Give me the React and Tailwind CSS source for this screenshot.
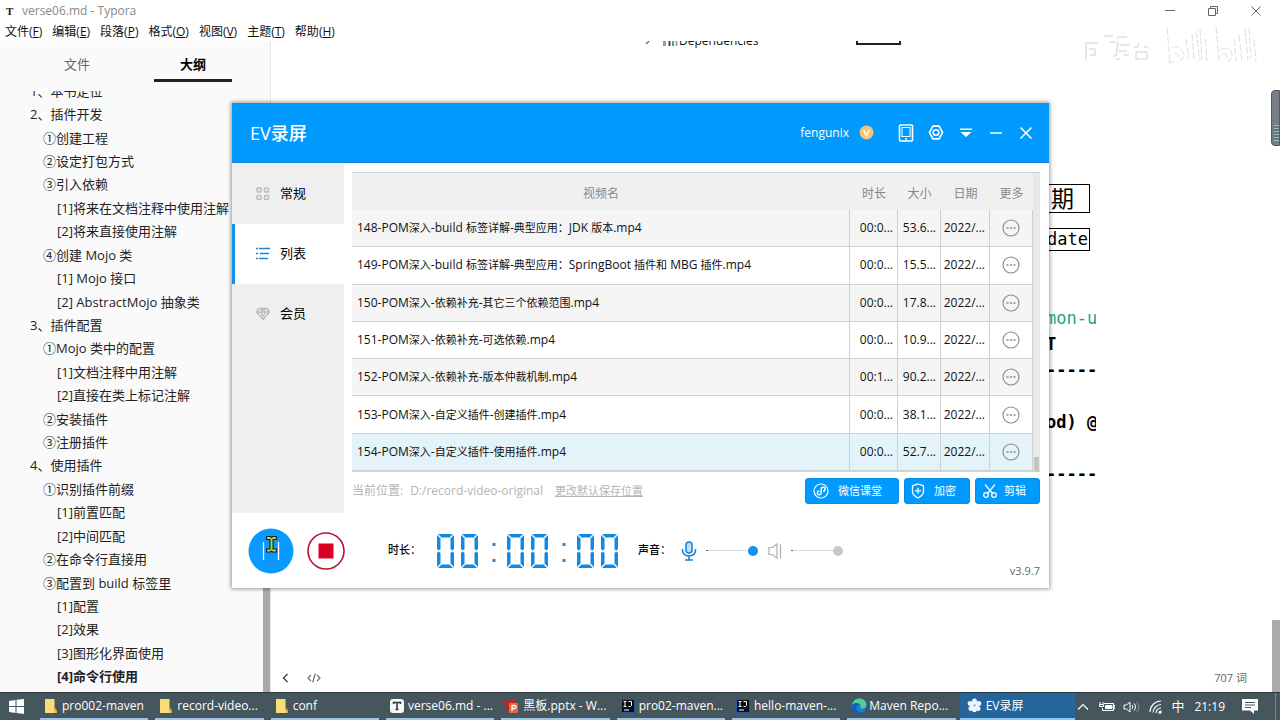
import { useState } from 'react'

const OUTLINE = [
  [0, '1、本书定位'],
  [0, '2、插件开发'],
  [1, '①创建工程'],
  [1, '②设定打包方式'],
  [1, '③引入依赖'],
  [2, '[1]将来在文档注释中使用注解'],
  [2, '[2]将来直接使用注解'],
  [1, '④创建 Mojo 类'],
  [2, '[1] Mojo 接口'],
  [2, '[2] AbstractMojo 抽象类'],
  [0, '3、插件配置'],
  [1, '①Mojo 类中的配置'],
  [2, '[1]文档注释中用注解'],
  [2, '[2]直接在类上标记注解'],
  [1, '②安装插件'],
  [1, '③注册插件'],
  [0, '4、使用插件'],
  [1, '①识别插件前缀'],
  [2, '[1]前置匹配'],
  [2, '[2]中间匹配'],
  [1, '②在命令行直接用'],
  [1, '③配置到 build 标签里'],
  [2, '[1]配置'],
  [2, '[2]效果'],
  [2, '[3]图形化界面使用'],
  [2, '[4]命令行使用'],
]

const INDENT = ['pl-[30px]', 'pl-[43px]', 'pl-[57px]']

const MENUS = [
  ['文件', 'F'],
  ['编辑', 'E'],
  ['段落', 'P'],
  ['格式', 'O'],
  ['视图', 'V'],
  ['主题', 'T'],
  ['帮助', 'H'],
]

const VIDEOS = [
  ['148-POM深入-build 标签详解-典型应用：JDK 版本.mp4', '00:0...', '53.6...'],
  ['149-POM深入-build 标签详解-典型应用：SpringBoot 插件和 MBG 插件.mp4', '00:0...', '15.5...'],
  ['150-POM深入-依赖补充-其它三个依赖范围.mp4', '00:0...', '17.8...'],
  ['151-POM深入-依赖补充-可选依赖.mp4', '00:0...', '10.9...'],
  ['152-POM深入-依赖补充-版本仲裁机制.mp4', '00:1...', '90.2...'],
  ['153-POM深入-自定义插件-创建插件.mp4', '00:0...', '38.1...'],
  ['154-POM深入-自定义插件-使用插件.mp4', '00:0...', '52.7...'],
]

export default function App() {
  return (
    <div className="relative h-screen overflow-hidden flex flex-col bg-white text-[#222] font-['Open_Sans','Noto_Sans_CJK_SC',sans-serif]">
      <TitleBar />
      <MenuBar />
      <main className="flex-1 min-h-0 flex">
        <Sidebar />
        <Document />
      </main>
      <Taskbar />
      <Watermark />
      <Recorder />
    </div>
  )
}

/* ---------- Typora ---------- */

function TitleBar() {
  return (
    <header className="h-[22px] shrink-0 flex items-center pl-1 pr-[18px] text-xs text-[#8a8a8a]">
      <span className="w-[18px] pl-[2px] font-['Liberation_Serif',serif] font-bold text-[11px] text-[#222]">T</span>
      <span>verse06.md - Typora</span>
      <div className="ml-auto flex items-center gap-8 text-[#666]">
        <button type="button" aria-label="minimize">
          <svg width="11" height="11" viewBox="0 0 11 11" stroke="currentColor" fill="none">
            <path d="M0 4.500h10" />
          </svg>
        </button>
        <button type="button" aria-label="restore">
          <svg width="11" height="11" viewBox="0 0 11 11" stroke="currentColor" fill="none">
            <path d="M.5 2.500h7v7h-7zM2.500 2.500v-2h7v7h-2" />
          </svg>
        </button>
        <button type="button" aria-label="close">
          <svg width="11" height="11" viewBox="0 0 11 11" stroke="currentColor" fill="none">
            <path d="M.5.5l9 9M9.500.5l-9 9" />
          </svg>
        </button>
      </div>
    </header>
  )
}

function MenuBar() {
  return (
    <nav className="h-[19px] shrink-0 flex items-center gap-[10px] pl-[5px] text-xs text-[#111]">
      {MENUS.map(([name, key]) => (
        <button key={key} type="button" className="whitespace-nowrap">
          {name}(<u>{key}</u>)
        </button>
      ))}
    </nav>
  )
}

function Sidebar() {
  const [tab, setTab] = useState('大纲')
  return (
    <aside className="w-[271px] shrink-0 flex flex-col bg-[#fafafa] border-r border-[#e6e6e6]">
      <div className="h-[50px] shrink-0 flex justify-center gap-[38px] pb-[9px] text-[13px]">
        {['文件', '大纲'].map((name) => (
          <button
            key={name}
            type="button"
            onClick={() => setTab(name)}
            className={
              tab === name
                ? 'w-[78px] pt-[10px] border-b-[3px] border-[#222] font-bold text-black'
                : 'w-[78px] pt-[10px] border-b-[3px] border-transparent text-[#666]'
            }
          >
            {name}
          </button>
        ))}
      </div>
      <div className="flex-1 min-h-0 flex overflow-hidden">
        <ul className="flex-1 -mt-3 mb-1 grid auto-rows-fr text-[13px] leading-5 whitespace-nowrap">
          {OUTLINE.map(([level, text], i) => (
            <li key={text + i} className={`min-h-0 flex items-center ${INDENT[level]}`}>
              <a href="#outline" className={i === OUTLINE.length - 1 ? 'font-bold' : ''}>
                {text}
              </a>
            </li>
          ))}
        </ul>
        <div className="w-[7px] flex flex-col justify-end">
          <div className="h-1/5 bg-[#aaa]" />
        </div>
      </div>
    </aside>
  )
}

function Document() {
  return (
    <section className="flex-1 min-w-0 flex flex-col overflow-hidden">
      <div className="flex-1 min-h-0 flex">
        <div className="flex-1 min-w-0 flex flex-col pr-[175px] overflow-hidden">
          <div className="h-2 overflow-hidden flex items-end pl-[372px]">
            <svg width="36" height="9" viewBox="0 0 36 9" fill="none">
              <path d="M3 4l4-4" stroke="#777" strokeWidth="1.500" />
              <path d="M21.500 0v6" stroke="#999" strokeWidth="3" />
              <path d="M26.500 0v6" stroke="#444" strokeWidth="2" />
              <path d="M30 0v6" stroke="#5b9a7a" strokeWidth="2" />
              <path d="M33.500 0v6" stroke="#7ab0cc" strokeWidth="2" />
            </svg>
            <span className="text-xs leading-4 text-[#111]">Dependencies</span>
            <span className="ml-[97px] mb-1 w-[45px] h-6 border-2 border-[#222]" />
          </div>
          <div className="mt-[135px] flex flex-col items-end pr-[6px] text-black">
            <div className="h-[29px] w-[120px] border border-black pr-[15px] flex items-center justify-end text-[23px] leading-none">日期</div>
            <div className="mt-[15px] h-[23px] w-[120px] border border-black pr-px flex items-center justify-end font-['DejaVu_Sans_Mono',monospace] text-[17px]">
              date
            </div>
          </div>
          <pre className="mt-[54px] self-end w-[50px] overflow-hidden font-['DejaVu_Sans_Mono',monospace] text-[17px] leading-[26px] text-black font-bold">
            <span className="font-normal text-[#1aa58a]">mon-u</span>
            {'\nT\n-----\n\nod) @\n\n-----'}
          </pre>
        </div>
        <div className="w-[9px] flex flex-col pt-[49px]">
          <div className="h-[56px] rounded-l border border-[#555a66] bg-[#777c88] flex flex-col justify-end pb-1 pl-[2px]">
            <div className="h-4 bg-[repeating-linear-gradient(to_bottom,#8fc7b4_0_1px,#6c727c_1px_3px)]" />
          </div>
        </div>
      </div>
      <div className="h-11 shrink-0 flex justify-end">
        <div className="w-2 bg-[#aaa]" />
      </div>
      <div className="h-7 shrink-0 flex text-xs text-[#666]">
        <div className="flex-1 flex items-center pl-[11px] pr-[25px]">
          <button type="button" aria-label="back">
            <svg width="7" height="10" viewBox="0 0 7 10" fill="none" stroke="#444" strokeWidth="1.400">
              <path d="M5.500 1L1.500 5l4 4" />
            </svg>
          </button>
          <button type="button" aria-label="source" className="ml-[18px]">
            <svg width="14" height="10" viewBox="0 0 14 10" fill="none" stroke="#666" strokeWidth="1.100">
              <path d="M4 2L1 5l3 3M10 2l3 3-3 3M8.300 .5l-2.600 9" />
            </svg>
          </button>
          <span className="ml-auto text-[11px]">707 词</span>
        </div>
        <div className="w-2 bg-[#aaa]" />
      </div>
    </section>
  )
}

function Watermark() {
  return (
    <svg className="absolute right-5 top-6" width="178" height="42" viewBox="0 0 178 42" fill="none" stroke="#d0d0d0" strokeWidth="1">
      <path d="M4 36V19h12M7 25h6v6H8M22 12h9M35 13h10M28 18h6M38 21h10M36 18l-2 14h-3M36 27h9M34 35h4M52 23h4l1-4M62 23h4M54 28h11v7H54zM41 31h6" />
      <path d="M85 4l3 33M90 24c8-5 16 7 8 13M92 29c4-1 6 4 2 5M86 38h6M104 15l3 20M110 10l2 26M114 7l4 30M118 5l2 30M123 15l2 22" stroke="#dedede" strokeDasharray="7 2" />
      <path d="M134 3l3 34M139 25c10-4 15 7 7 13M141 30c4-1 6 4 2 5M152 15l2 22M157 11l3 27M163 5l3 31M167 4l2 30M172 16l2 21" stroke="#dedede" strokeDasharray="7 2" />
    </svg>
  )
}

/* ---------- EV recorder window ---------- */

function Recorder() {
  return (
    <div className="absolute left-[232px] top-[103px] w-[817px] flex flex-col bg-white shadow-[0_0_4px_1px_rgba(0,0,0,0.4)]">
      <RecorderHeader />
      <div className="h-[350px] flex">
        <RecorderTabs />
        <div className="flex-1 min-w-0 pl-2 pr-[9px] pt-[9px] flex flex-col">
          <VideoTable />
          <VideoActions />
        </div>
      </div>
      <Controls />
    </div>
  )
}

function RecorderHeader() {
  return (
    <div className="h-[60px] bg-[#009aff] border-b border-[#1583d0] text-white flex items-center pl-[18px] pr-[15px]">
      <h1 className="text-lg font-medium">EV录屏</h1>
      <span className="ml-auto text-xs">fengunix</span>
      <svg className="ml-[10px]" width="15" height="15" viewBox="0 0 15 15">
        <circle cx="7.500" cy="7.500" r="7" fill="#f8c272" />
        <path d="M4.500 5l3 5.500L10.500 5" fill="none" stroke="#fff3dc" strokeWidth="2" />
      </svg>
      <div className="ml-6 flex items-center gap-[14px]">
        <button type="button" aria-label="phone">
          <svg width="16" height="18" viewBox="0 0 16 18" fill="none" stroke="#fff">
            <rect x="1.500" y="1" width="13" height="16" rx="1" strokeWidth="1.600" />
            <rect x="4" y="3.500" width="8" height="9" />
            <path d="M7 15h2" strokeWidth="1.500" />
          </svg>
        </button>
        <button type="button" aria-label="settings">
          <svg width="16" height="17" viewBox="0 0 17 17" fill="none" stroke="#fff">
            <path d="M5.200 1.700h6.600l1.400 2.600 2.300 4.200-2.300 4.200-1.400 2.600H5.200l-1.400-2.600L1.500 8.500l2.300-4.200z" strokeWidth="1.700" strokeLinejoin="round" />
            <circle cx="8.500" cy="8.500" r="3" strokeWidth="1.600" />
          </svg>
        </button>
        <button type="button" aria-label="menu">
          <svg width="16" height="16" viewBox="0 0 16 16" fill="#fff">
            <path d="M2 3.500h12v1.500H2zM2.500 7h11L8 12z" />
          </svg>
        </button>
        <button type="button" aria-label="minimize">
          <svg width="16" height="16" viewBox="0 0 16 16" stroke="#fff" strokeWidth="1.500">
            <path d="M2 8h12" />
          </svg>
        </button>
        <button type="button" aria-label="close">
          <svg width="16" height="16" viewBox="0 0 16 16" stroke="#fff" strokeWidth="1.500">
            <path d="M2.500 2.500l11 11M13.500 2.500l-11 11" />
          </svg>
        </button>
      </div>
    </div>
  )
}

const GridSVG = () => (
  <svg width="16" height="16" viewBox="0 0 16 16" fill="none" stroke="#bbb" strokeWidth="1.500">
    <rect x="2" y="2" width="4" height="4" rx="1" />
    <rect x="9.500" y="2" width="4" height="4" rx="1" />
    <rect x="2" y="9.500" width="4" height="4" rx="1" />
    <rect x="9.500" y="9.500" width="4" height="4" rx="1" />
  </svg>
)

const ListSVG = () => (
  <svg width="16" height="16" viewBox="0 0 16 16" fill="none" stroke="#1c86d8" strokeWidth="1.400">
    <path d="M1 2.500h2M4 2.500h11M1 7.500h2M5 7.500h9M1 12.500h2M4 12.500h9" />
  </svg>
)

const GemSVG = () => (
  <svg width="16" height="16" viewBox="0 0 16 16" fill="none" stroke="#bbb" strokeWidth="1.400" strokeLinejoin="round">
    <path d="M4 2.500h8l2.500 3.500L8 13.500 1.500 6zM1.500 6h13M5.500 6L8 10.500 10.500 6M5.500 4h5" />
  </svg>
)

const TABS = [
  ['常规', GridSVG],
  ['列表', ListSVG],
  ['会员', GemSVG],
]

function RecorderTabs() {
  const [active, setActive] = useState('列表')
  return (
    <div className="w-28 shrink-0 pt-px bg-[#efefef] flex flex-col">
      {TABS.map(([name, Icon]) => (
        <button
          key={name}
          type="button"
          onClick={() => setActive(name)}
          className={
            active === name
              ? 'h-[60px] flex items-center gap-[9px] pl-5 text-[13px] text-black bg-white border-l-[3px] border-[#1192ee]'
              : 'h-[60px] flex items-center gap-[9px] pl-5 text-[13px] text-black border-l-[3px] border-transparent'
          }
        >
          <Icon />
          {name}
        </button>
      ))}
    </div>
  )
}

// Chinese runs are set one size below the Latin ones
function FileName({ text }) {
  return text.split(/([\u3000-\uffef]+)/).map((part, i) =>
    i % 2 ? (
      <span key={i} className="text-[11px]">
        {part}
      </span>
    ) : (
      part
    )
  )
}

function VideoTable() {
  const [selected, setSelected] = useState(6)
  return (
    <div className="h-[300px] shrink-0 flex border-t border-b border-[#ccd4dc]">
      <table className="flex-1 h-[298px] table-fixed border-separate border-spacing-0 text-xs text-[#111]">
        <colgroup>
          <col />
          <col className="w-12" />
          <col className="w-[43px]" />
          <col className="w-[49px]" />
          <col className="w-[43px]" />
        </colgroup>
        <thead>
          <tr className="h-[37px] bg-[#f0f0f0] text-[#888] [&_th]:font-normal [&_th]:pt-1">
            <th>视频名</th>
            <th>时长</th>
            <th>大小</th>
            <th>日期</th>
            <th>更多</th>
          </tr>
        </thead>
        <tbody className="[&_td]:border-r [&_td]:border-b [&_td]:border-[#d0d0d0] [&_td]:p-0 [&_td]:whitespace-nowrap">
          {VIDEOS.map(([name, time, size], i) => (
            <tr
              key={name}
              onClick={() => setSelected(i)}
              className={selected === i ? 'bg-[#e4f2fa]' : i % 2 === 0 ? 'bg-[#f5f5f5]' : 'bg-white'}
            >
              <td>
                <span className="pl-[5px]">
                  <FileName text={name} />
                </span>
              </td>
              <td className="text-right">
                <span className="pr-1">{time}</span>
              </td>
              <td className="text-right">
                <span className="pr-1">{size}</span>
              </td>
              <td className="text-right">
                <span className="pr-1">2022/...</span>
              </td>
              <td>
                <button type="button" aria-label="更多" className="block mx-auto">
                  <svg width="18" height="18" viewBox="0 0 18 18" fill="none" stroke="#888">
                    <circle cx="9" cy="9" r="8" strokeWidth="1.100" />
                    <path d="M4.500 9h2M8 9h2M11.500 9h2" strokeWidth="1.600" />
                  </svg>
                </button>
              </td>
            </tr>
          ))}
        </tbody>
      </table>
      <div className="w-[7px] bg-[#e8e8ea] flex flex-col justify-end">
        <div className="h-[14px] mx-px bg-[#c4c4c4]" />
      </div>
    </div>
  )
}

function VideoActions() {
  return (
    <div className="flex-1 pb-[3px] flex items-center text-[11px] text-[#b4b4b4] whitespace-nowrap">
      <span className="text-xs">当前位置:</span>
      <span className="ml-[7px] text-xs">D:/record-video-original</span>
      <a href="#path" className="ml-3 underline">
        更改默认保存位置
      </a>
      <div className="ml-auto flex gap-[5px] text-white">
        <button type="button" className="w-[94px] h-[26px] rounded-[3px] bg-[#009aff] border border-[#0b8be6] flex items-center gap-[9px] pl-[7px]">
          <svg width="16" height="16" viewBox="0 0 16 16" fill="none" stroke="#fff" strokeWidth="1.200">
            <circle cx="8" cy="8" r="7" />
            <path d="M8.200 10a1.900 1.900 0 1 1-1.900-2M8.200 10V6M8.200 6a1.900 1.900 0 1 1 1.900 2" strokeWidth="1.400" />
          </svg>
          微信课堂
        </button>
        <button type="button" className="w-[66px] h-[26px] rounded-[3px] bg-[#009aff] border border-[#0b8be6] flex items-center gap-[8px] pl-[5px]">
          <svg width="16" height="16" viewBox="0 0 16 16" fill="none" stroke="#fff" strokeWidth="1.300">
            <path d="M8 1l5.500 1.800v5.700c0 3-2.500 5-5.500 6.500-3-1.500-5.500-3.500-5.500-6.500V2.800zM8 4.800v6M5 7.800h6" />
          </svg>
          加密
        </button>
        <button type="button" className="w-[65px] h-[26px] rounded-[3px] bg-[#009aff] border border-[#0b8be6] flex items-center gap-[6px] pl-[6px]">
          <svg width="16" height="16" viewBox="0 0 16 16" fill="none" stroke="#fff" strokeWidth="1.300">
            <path d="M3 1.500l8 9.500M13 1.500L5 11" />
            <circle cx="4" cy="12" r="2.300" />
            <circle cx="12" cy="12" r="2.300" />
          </svg>
          剪辑
        </button>
      </div>
    </div>
  )
}

const Digit = () => (
  <svg width="17" height="34" viewBox="0 0 17 34" fill="#118ae6">
    <path d="M1 0h15l-3.500 3.500h-8z" />
    <path d="M4.500 30.500h8L16 34H1z" />
    <path d="M0 1l3.500 3.500V15l-1.700 1.500L0 15z" />
    <path d="M17 1l-3.500 3.500V15l1.700 1.500L17 15z" />
    <path d="M0 19l1.800-1.500L3.500 19v10.500L0 33z" />
    <path d="M17 19l-1.800-1.500L13.500 19v10.500L17 33z" />
  </svg>
)

const Colon = () => (
  <svg width="15" height="34" viewBox="0 0 15 34" fill="#3b85c8">
    <path d="M7.500 9h3v3h-3zM7.500 25h3v3h-3z" />
  </svg>
)

function Controls() {
  return (
    <div className="h-[75px] flex items-center pl-4 pr-[9px] text-[11px] text-black">
      <button type="button" aria-label="pause">
        <svg width="46" height="46" viewBox="0 0 46 46">
          <circle cx="23" cy="23" r="22.500" fill="#0a9aff" />
          <path d="M15.500 14v18M30.500 14v18" stroke="#fff" strokeWidth="1.300" />
          <path d="M18.500 8.500h4l1 1 1-1h4v3H25v9.500h3.500v3h-4l-1-1-1 1h-4v-3H22v-9.500h-3.500z" fill="#c2d13a" stroke="#123" strokeWidth="1.100" />
        </svg>
      </button>
      <button type="button" aria-label="stop" className="ml-[13px]">
        <svg width="38" height="38" viewBox="0 0 38 38">
          <circle cx="19" cy="19" r="18" fill="#fff" stroke="#b5122f" strokeWidth="1.600" />
          <path d="M11.500 11.500h15v15h-15z" fill="#da0022" />
        </svg>
      </button>
      <span className="ml-[43px] w-[49px] font-medium">时长：</span>
      <div className="flex gap-[7px]">
        <Digit />
        <Digit />
        <Colon />
        <Digit />
        <Digit />
        <Colon />
        <Digit />
        <Digit />
      </div>
      <span className="ml-5 w-[42px] font-medium">声音：</span>
      <svg width="18" height="22" viewBox="0 0 18 22" fill="none" stroke="#1684dc" strokeWidth="1.600">
        <rect x="6" y="2" width="6" height="11" rx="3" fill="#bfe0fa" />
        <path d="M2.500 9v1.500a6.500 5.500 0 0 0 13 0V9M9 16v4M5 20h8" />
      </svg>
      <input
        type="range"
        aria-label="麦克风音量"
        defaultValue="100"
        className="ml-2 w-[52px] h-3 appearance-none bg-[linear-gradient(to_right,#567_2px,#ddd_2px)] bg-[length:100%_1px] bg-center bg-no-repeat [&::-webkit-slider-thumb]:appearance-none [&::-webkit-slider-thumb]:size-[10px] [&::-webkit-slider-thumb]:rounded-full [&::-webkit-slider-thumb]:bg-[#1192ee]"
      />
      <svg className="ml-[9px]" width="16" height="18" viewBox="0 0 16 18" fill="none" stroke="#b0b0b0" strokeWidth="1.200">
        <path d="M2 5.500h3.500L10 2v14l-4.500-3.500H2zM13.500 2v14" />
      </svg>
      <input
        type="range"
        aria-label="扬声器音量"
        defaultValue="100"
        className="ml-2 w-[52px] h-3 appearance-none bg-[linear-gradient(to_right,#567_2px,#ddd_2px)] bg-[length:100%_1px] bg-center bg-no-repeat [&::-webkit-slider-thumb]:appearance-none [&::-webkit-slider-thumb]:size-[10px] [&::-webkit-slider-thumb]:rounded-full [&::-webkit-slider-thumb]:bg-[#c8c8c8]"
      />
      <span className="ml-auto self-end pb-[9px] text-[#666]">v3.9.7</span>
    </div>
  )
}

/* ---------- Windows taskbar ---------- */

const FolderSVG = () => (
  <svg width="14" height="16" viewBox="0 0 14 16">
    <path d="M1 1h9.500v11h2v3H1z" fill="#fbdc7a" />
    <path d="M10.500 9l2 3v3h-2z" fill="#e3b64c" />
  </svg>
)

const TyporaSVG = () => (
  <svg width="14" height="14" viewBox="0 0 14 14">
    <rect width="14" height="14" rx="3" fill="#f4f6f7" />
    <path d="M3.500 5V3.500h7V5M7 3.500v7M5.500 10.500h3" fill="none" stroke="#333" strokeWidth="1.500" />
  </svg>
)

const PptSVG = () => (
  <svg width="17" height="16" viewBox="0 0 17 16" className="-ml-[3px]">
    <path d="M0 2l6 1 8-3v8l-6 7-4-6z" fill="#b8272b" />
    <rect x="7" y="5" width="9" height="10" rx="1" fill="#e8643a" />
    <path d="M10 13V7.500h2.500a1.500 1.500 0 0 1 0 3H10" fill="none" stroke="#fff" strokeWidth="1.300" />
  </svg>
)

const IdeaSVG = () => (
  <svg width="14" height="14" viewBox="0 0 14 14">
    <rect width="14" height="14" rx="1" fill="#1d55a8" />
    <path d="M1 1h12v12H1z" fill="#0b0d14" />
    <path d="M2.500 2.500h3M4 2.500v5M2.500 7.500h3M7.500 2.500h3v4l-1 1h-2M3 11h5" fill="none" stroke="#fff" />
  </svg>
)

const EdgeSVG = () => (
  <svg width="16" height="16" viewBox="0 0 16 16">
    <circle cx="8" cy="8" r="7.500" fill="#1c7fd6" />
    <path d="M1 7C2 2.500 5 .5 8.500.5c4 0 7 3 7 6 0 2.500-2 4-4.500 4-1 0-2-.5-1.500-1.500C10 7 8 5 5.500 5 3.500 5 2 5.500 1 7z" fill="#4fcf9c" />
    <path d="M5.500 8c-1 3 1 6.500 6 6-4 3-10 1-11-5C1 6 4 5 5.500 5c1.500 0 3 .8 3.200 2-1.200-.6-2.600-.4-3.200 1z" fill="#1460b4" />
  </svg>
)

const EvSVG = () => (
  <svg width="15" height="15" viewBox="0 0 15 15" fill="#eef6ff">
    <circle cx="7.500" cy="3" r="2.500" />
    <circle cx="3.200" cy="5.500" r="2.500" />
    <circle cx="11.800" cy="5.500" r="2.500" />
    <circle cx="4" cy="10.500" r="2.500" />
    <circle cx="11" cy="10.500" r="2.500" />
    <circle cx="7.500" cy="12" r="2.300" />
    <circle cx="7.500" cy="7.500" r="3.500" />
    <circle cx="7.500" cy="7.500" r="1.200" fill="#8ab8dc" />
  </svg>
)

const TASKS = [
  [FolderSVG, 'pro002-maven'],
  [FolderSVG, 'record-video...'],
  [FolderSVG, 'conf'],
  [TyporaSVG, 'verse06.md - ...'],
  [PptSVG, '黑板.pptx - W...'],
  [IdeaSVG, 'pro02-maven...'],
  [IdeaSVG, 'hello-maven-...'],
  [EdgeSVG, 'Maven Repo...'],
]

function Taskbar() {
  return (
    <footer className="h-7 shrink-0 flex items-stretch bg-[#45565c] border-t border-[#2a363b] text-xs text-white">
      <button type="button" aria-label="start" className="w-[37px] shrink-0 pl-[9px]">
        <svg width="15" height="15" viewBox="0 0 15 15" fill="#fff">
          <path d="M0 2l6.500-1v6H0zM7.500.8L15 0v7H7.500zM0 8h6.500v6L0 13zM7.500 8H15v7l-7.500-1z" />
        </svg>
      </button>
      <div className="flex-1 max-w-[1038px] flex">
        {TASKS.map(([Icon, name]) => (
          <button key={name} type="button" className="flex-1 min-w-0 flex pl-[3px] pr-1">
            <span className="flex-1 h-full pl-1 flex items-center gap-1 border-b-2 border-[#9fc3e6] whitespace-nowrap">
              <span className="w-[14px] shrink-0">
                <Icon />
              </span>
              {name}
            </span>
          </button>
        ))}
        <button type="button" className="flex-1 min-w-0 pl-[7px] flex items-center gap-1 bg-[#25659b] border-b-2 border-[#8cc4f4] whitespace-nowrap">
          <EvSVG />
          EV录屏
        </button>
      </div>
      <div className="ml-auto shrink-0 flex items-center pr-1">
        <svg width="12" height="12" viewBox="0 0 12 12" fill="none" stroke="#fff" strokeWidth="1.200">
          <path d="M1 8.500l5-5 5 5" />
        </svg>
        <svg className="ml-[10px]" width="16" height="14" viewBox="0 0 16 14" fill="none" stroke="#fff">
          <path d="M5 3.500h9.500v7H3.500V8M1 2v2M4 2v2M.5 4.500h4v2h-4zM14.500 5.500H16v3h-1.500" />
          <path d="M6.500 5.500h6.500v3H6.500z" fill="#fff" />
        </svg>
        <svg className="ml-2" width="17" height="14" viewBox="0 0 17 14" fill="none" stroke="#fff">
          <path d="M1 5h2.500L7 2v10L3.500 9H1zM9 5c1 1 1 3 0 4M11 3.500c2 2 2 5 0 7" />
          <path d="M13.500 2c3 3 3 7 0 10" stroke="#8b979b" />
        </svg>
        <svg className="ml-[9px]" width="14" height="14" viewBox="0 0 14 14" fill="none" stroke="#fff" strokeWidth="1.100">
          <path d="M1 12C1 6 6 1 12 1M4 12.500c0-4 4-8 8-8M7 13c0-3 2.500-5 5-5" />
          <path d="M10 13c0-1 .8-2 2-2v2z" fill="#fff" />
        </svg>
        <span className="ml-2 text-[13px]">中</span>
        <span className="ml-[10px]">21:19</span>
        <svg className="ml-[17px]" width="16" height="15" viewBox="0 0 16 15">
          <path d="M0 0h16v11.500h-4V15l-4-3.500H0z" fill="#fff" />
          <path d="M3 3.500h10M3 6h10M3 8.500h6" stroke="#45565c" />
        </svg>
        <span className="ml-[17px] h-full border-l border-[#7b878b]" />
      </div>
    </footer>
  )
}
